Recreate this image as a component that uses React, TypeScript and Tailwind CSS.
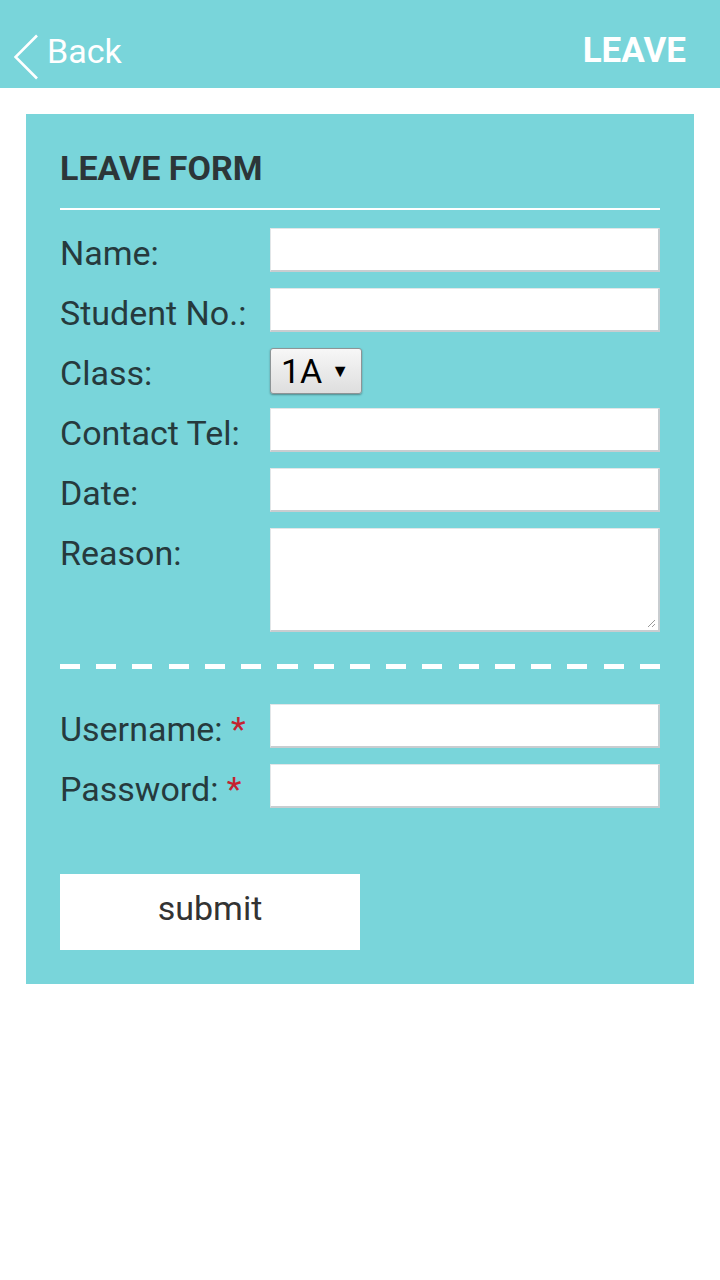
import React from "react";

const TEAL = "bg-[#79d5da]";

type Field = {
  label: string;
  kind: "text" | "select" | "textarea";
  required?: boolean;
};

const INFO_FIELDS: Field[] = [
  { label: "Name:", kind: "text" },
  { label: "Student No.:", kind: "text" },
  { label: "Class:", kind: "select" },
  { label: "Contact Tel:", kind: "text" },
  { label: "Date:", kind: "text" },
  { label: "Reason:", kind: "textarea" },
];

const LOGIN_FIELDS: Field[] = [
  { label: "Username:", kind: "text", required: true },
  { label: "Password:", kind: "text", required: true },
];

function TextBox({ tall = false }: { tall?: boolean }) {
  return (
    <div
      className={`relative w-[390px] bg-white border border-[#e2e6e8] border-r-[#c9cdd0] border-b-[#c9cdd0] border-r-2 border-b-2 ${
        tall ? "h-[104px]" : "h-[44px]"
      }`}
    >
      {tall && (
        <svg
          className="absolute right-[2px] bottom-[2px]"
          width="9"
          height="9"
          viewBox="0 0 9 9"
        >
          <path d="M1 8 L8 1 M5 8 L8 5" stroke="#999" strokeWidth="1" />
        </svg>
      )}
    </div>
  );
}

function ClassSelect() {
  // native-looking select, 2px taller than the row, like the original
  return (
    <div className="mb-[-2px] flex items-center h-[46px] w-[92px] pl-[10px] pr-[12px] justify-between rounded-[3px] border border-[#8e9496] bg-[linear-gradient(#f7f7f7,#dedede)] shadow-[0_1px_2px_rgba(0,0,0,0.35)]">
      <span className="text-[34px] leading-none text-black">1A</span>
      <span className="text-[18px] leading-none text-black">▼</span>
    </div>
  );
}

function Row({ field }: { field: Field }) {
  return (
    <div className="flex items-start">
      <div className="w-[210px] shrink-0 pt-[7px] text-[34px] leading-[37px] text-[#263a3d] whitespace-nowrap">
        {field.label}
        {field.required && <span className="text-[#c4232f]"> *</span>}
      </div>
      {field.kind === "select" ? (
        <ClassSelect />
      ) : (
        <TextBox tall={field.kind === "textarea"} />
      )}
    </div>
  );
}

export default function App() {
  return (
    <div className="min-h-[1280px] w-[720px] bg-white font-['Roboto','Liberation_Sans',sans-serif]">
      <header className={`${TEAL} h-[88px] flex items-start justify-between pl-[14px] pr-[34px]`}>
        <div className="flex items-start pt-[34px]">
          <svg width="26" height="46" viewBox="0 0 26 46" className="mr-[7px]">
            <path
              d="M23 1.5 L1.5 23 L23 44.5"
              fill="none"
              stroke="white"
              strokeWidth="2.6"
            />
          </svg>
          <span className="text-[34px] text-white leading-none">Back</span>
        </div>
        <span className="mt-[33px] text-[35px] font-bold text-white leading-none">LEAVE</span>
      </header>

      <main className="pt-[26px] px-[26px]">
        <div className={`${TEAL} px-[34px] pt-[34px] pb-[34px]`}>
          <h1 className="text-[34px] font-bold leading-[40px] text-[#2c3638]">
            LEAVE FORM
          </h1>
          <div className="mt-[20px] h-[2px] bg-white" />

          <div className="mt-[18px] flex flex-col gap-[16px]">
            {INFO_FIELDS.map((f) => (
              <Row key={f.label} field={f} />
            ))}
          </div>

          <div className="mt-[32px] h-[5px] bg-[repeating-linear-gradient(to_right,white_0_20px,transparent_20px_36.25px)]" />

          <div className="mt-[35px] flex flex-col gap-[16px]">
            {LOGIN_FIELDS.map((f) => (
              <Row key={f.label} field={f} />
            ))}
          </div>

          <button
            type="button"
            className="mt-[66px] flex h-[76px] w-[300px] items-center justify-center pb-[7px] bg-white text-[34px] text-[#333]"
          >
            submit
          </button>
        </div>
      </main>
    </div>
  );
}
